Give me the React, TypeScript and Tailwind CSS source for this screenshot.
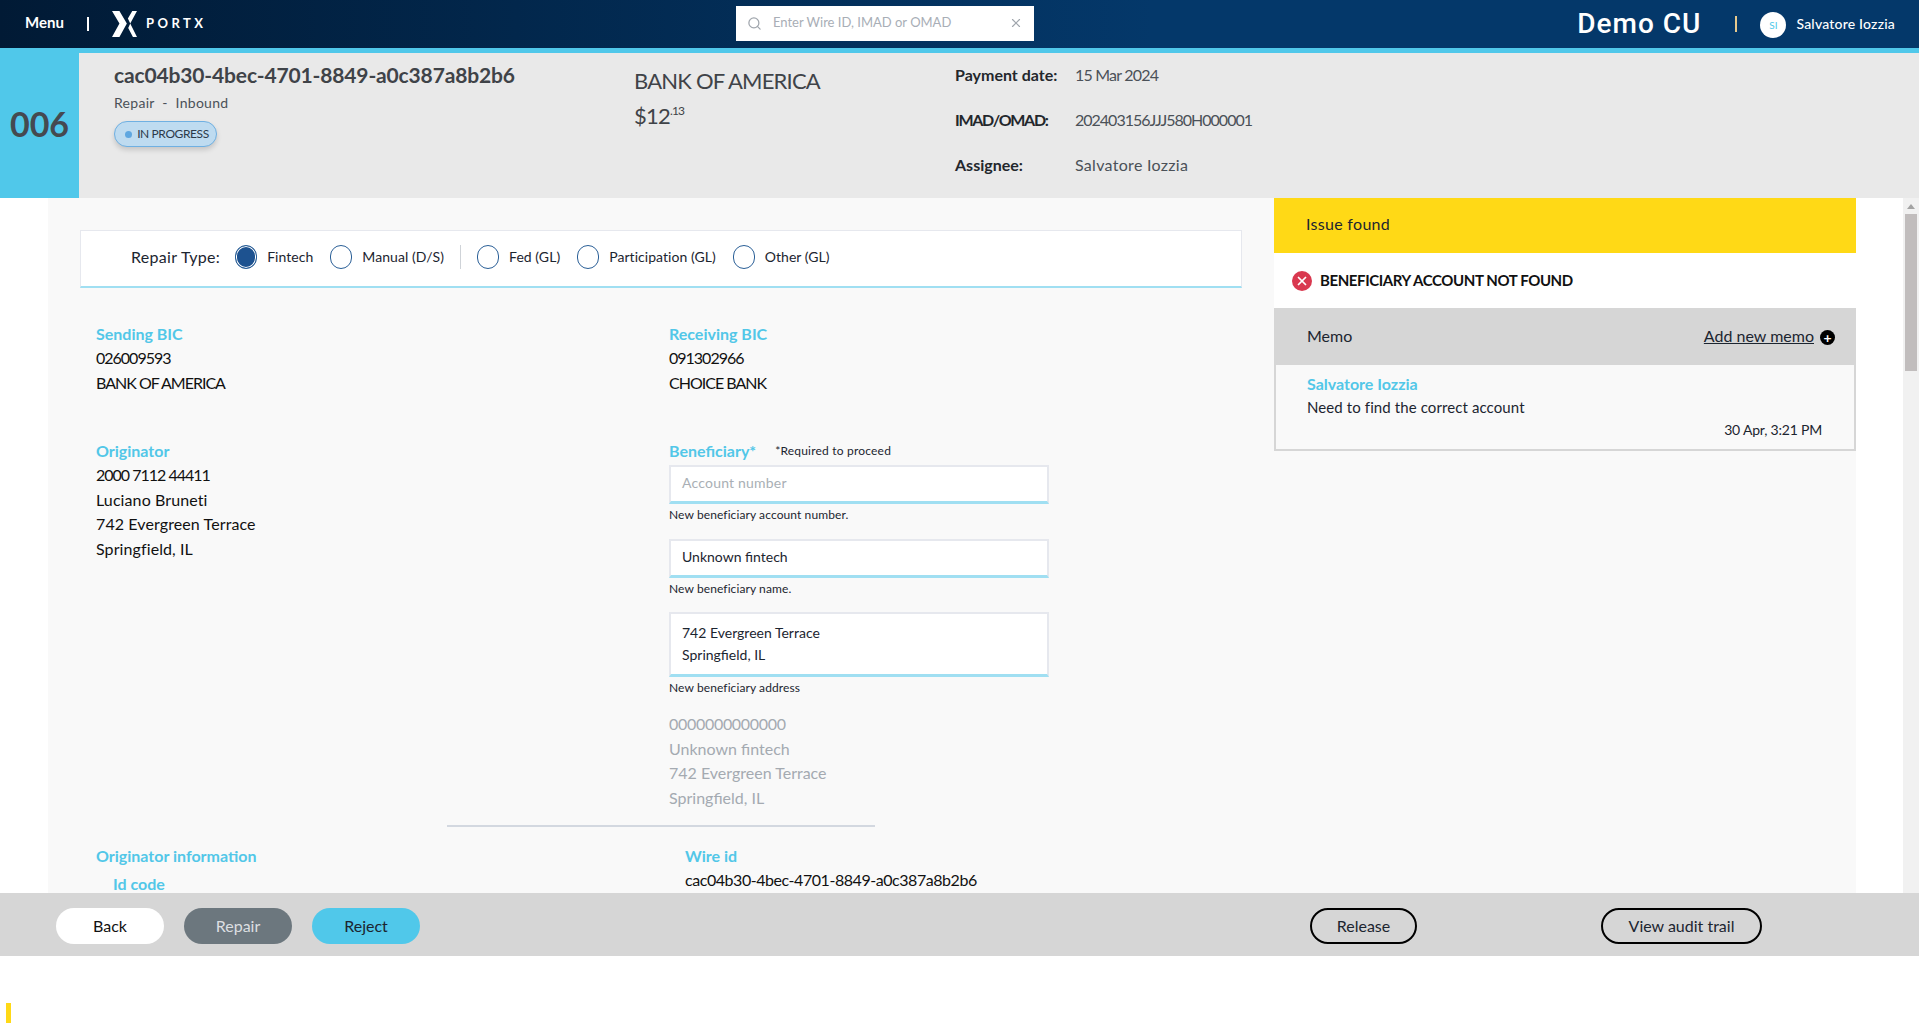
import { Search, X } from "lucide-react";

type RadioT = {
  label: string;
  checked?: boolean;
  divider?: boolean;
};

const repairTypes: RadioT[] = [
  { label: "Fintech", checked: true },
  { label: "Manual (D/S)", divider: true },
  { label: "Fed (GL)" },
  { label: "Participation (GL)" },
  { label: "Other (GL)" },
];

const Logo = () => (
  <svg width="25" height="26" viewBox="0 0 74 77" fill="white">
    <path d="M0 0H22L44 37L22 77H0L22 37Z" />
    <path d="M74 0H60L47 22L54 37L48 50L62 77H74L54 37Z" />
  </svg>
);

const RadioItem = ({ label, checked, divider }: RadioT) => (
  <>
    <div className="flex items-center">
      <span
        className={`h-[24px] w-[22px] rounded-full border border-[#2a5f97] ${checked ? "bg-[#1d5290] ring-1 ring-inset ring-white" : "bg-white"}`}
      />
      <span className="ml-[10px] text-[14px] tracking-[0.05px] text-[#1c2530]">{label}</span>
    </div>
    {divider ? <div className="mx-[16px] h-[24px] w-px bg-[#cfd3d8]" /> : <div className="w-[17px]" />}
  </>
);

const Field = ({
  title,
  lines,
  className,
}: {
  title: string;
  lines: string[];
  className?: string;
}) => (
  <div className={className}>
    <p className="text-[16px] leading-[25px] font-bold text-[#52c7e8]">{title}</p>
    {lines.map((line) => (
      <p
        key={line}
        className={`text-[16px] leading-[24.600px] text-[#111] ${/^[A-Z0-9 ]+$/.test(line) ? "tracking-[-1px]" : "tracking-[0.1px]"}`}
      >
        {line}
      </p>
    ))}
  </div>
);

const InputBox = ({ children, height }: { children: React.ReactNode; height: string }) => (
  <div
    className={`${height} w-[380px] border-2 border-b-[3px] border-[#e6e8ee] border-b-[#a0dff2] bg-white px-[11px] text-[14px]`}
  >
    {children}
  </div>
);

const Helper = ({ text }: { text: string }) => (
  <p className="mt-[3px] text-[12px] leading-[16px] tracking-[0.1px] text-[#1c2530]">{text}</p>
);

export default function App() {
  return (
    <div className="flex h-[1023px] w-full flex-col overflow-hidden bg-white font-['Lato',sans-serif]">
      {/* top bar */}
      <header className="relative flex h-[53px] shrink-0 items-center border-b-[5px] border-[#50c8ea] bg-gradient-to-r from-[#011a35] to-[#04386a] to-60%">
        <span className="ml-[25px] pb-[4px] text-[15px] font-bold text-white">Menu</span>
        <span className="ml-[23px] h-[14px] w-[2px] bg-white" />
        <div className="ml-[23px] flex">
          <Logo />
        </div>
        <span className="ml-[9px] text-[13px] font-bold tracking-[3.500px] text-white">PORTX</span>
        <div className="absolute top-[6px] left-[736px] flex h-[35px] w-[298px] items-center bg-white px-[11px] pb-[1px] text-[13px] text-[#a8aeb6]">
          <Search size={15} className="text-[#a0a6ad]" />
          <span className="ml-[11px] flex-1">Enter Wire ID, IMAD or OMAD</span>
          <X size={14} className="text-[#a0a6ad]" />
        </div>
        <span className="ml-auto font-['Roboto',sans-serif] text-[28px] font-medium tracking-[1px] text-white">
          Demo CU
        </span>
        <span className="ml-[34px] h-[16px] w-[2px] bg-[#e7c98d]" />
        <span className="mt-[2px] ml-[23px] flex h-[26px] w-[26px] items-center justify-center rounded-full bg-white text-[10px] text-[#50c8ea]">
          SI
        </span>
        <span className="mr-[24px] ml-[10px] pb-[2px] text-[14px] font-medium tracking-[0.2px] text-white">
          Salvatore Iozzia
        </span>
      </header>

      {/* wire summary */}
      <section className="flex h-[145px] shrink-0 bg-[#e9e9e9]">
        <div className="flex w-[79px] items-center justify-center bg-[#50c8ea] pb-[5px] text-[34px] font-bold text-[#454a50]">
          006
        </div>
        <div className="w-[555px] pt-[6px] pl-[35px]">
          <h1 className="text-[21px] leading-[32px] font-bold tracking-[-0.15px] text-[#3f4348]">
            cac04b30-4bec-4701-8849-a0c387a8b2b6
          </h1>
          <p className="mt-[2px] text-[14px] leading-[20px] tracking-[0.3px] text-[#4b5158]">Repair&nbsp; -&nbsp; Inbound</p>
          <div className="mt-[8px] flex h-[26px] w-[103px] items-center justify-center rounded-full border border-[#6fb0e2] bg-[#bedbf0] pl-[3px] text-[12px] tracking-[-0.4px] text-[#2c3a4a] shadow-[0_3px_5px_rgba(0,0,0,0.15)]">
            <span className="mr-[5px] h-[7px] w-[7px] rounded-full bg-[#5fa7e0]" />
            IN PROGRESS
          </div>
        </div>
        <div className="w-[321px] pt-[12px] text-[#3f4348]">
          <p className="text-[22px] leading-[32px] tracking-[-0.8px]">BANK OF AMERICA</p>
          <p className="mt-[3px] text-[22px] leading-[32px] tracking-[-0.8px]">
            $12<sup className="relative -top-[9px] text-[12px]">.13</sup>
          </p>
        </div>
        <div className="grid grid-cols-[120px_1fr] content-start gap-y-[22px] pt-[10px] text-[16px] leading-[23px] text-[#4b5158]">
          <span className="font-bold text-[#23272c]">Payment date:</span>
          <span className="tracking-[-0.8px]">15 Mar 2024</span>
          <span className="font-bold tracking-[-1.300px] text-[#23272c]">IMAD/OMAD:</span>
          <span className="tracking-[-1px]">202403156JJJ580H000001</span>
          <span className="font-bold text-[#23272c]">Assignee:</span>
          <span className="tracking-[0.3px]">Salvatore Iozzia</span>
        </div>
      </section>

      {/* scroll area */}
      <main className="flex min-h-0 flex-1">
        <div className="flex flex-1 overflow-hidden pl-[48px]">
          <div className="flex w-[1808px] bg-[#f9f9f9]">
            <div className="w-[1226px] shrink-0 pt-[32px] pl-[32px]">
              <div className="flex h-[58px] w-[1162px] items-center border border-b-2 border-[#e6e8ee] border-b-[#a0dff2] bg-white pb-[4px] pl-[50px]">
                <span className="mr-[15px] text-[16px] tracking-[0.3px] text-[#1c2530]">Repair Type:</span>
                {repairTypes.map((item) => (
                  <RadioItem key={item.label} {...item} />
                ))}
              </div>

              <div className="mt-[33px] grid grid-cols-[573px_1fr] pl-[16px]">
                <Field title="Sending BIC" lines={["026009593", "BANK OF AMERICA"]} />
                <Field title="Receiving BIC" lines={["091302966", "CHOICE BANK"]} />
                <Field
                  className="mt-[43px]"
                  title="Originator"
                  lines={["2000 7112 44411", "Luciano Bruneti", "742 Evergreen Terrace", "Springfield, IL"]}
                />
                <div className="mt-[43px]">
                  <div className="flex items-center">
                    <span className="text-[16px] leading-[25px] font-bold text-[#52c7e8]">Beneficiary*</span>
                    <span className="ml-[19px] text-[12px] tracking-[0.2px] text-[#1c2530]">*Required to proceed</span>
                  </div>
                  <div className="mt-[2px]">
                    <InputBox height="h-[39px]">
                      <p className="pt-[5px] tracking-[0.2px] text-[#a9afb5]">Account number</p>
                    </InputBox>
                  </div>
                  <Helper text="New beneficiary account number." />
                  <div className="mt-[16px]">
                    <InputBox height="h-[39px]">
                      <p className="pt-[5px] text-[#1c2530]">Unknown fintech</p>
                    </InputBox>
                  </div>
                  <Helper text="New beneficiary name." />
                  <div className="mt-[15px]">
                    <InputBox height="h-[65px]">
                      <p className="pt-[8px] leading-[22px] text-[#1c2530]">
                        742 Evergreen Terrace
                        <br />
                        Springfield, IL
                      </p>
                    </InputBox>
                  </div>
                  <Helper text="New beneficiary address" />
                  <div className="mt-[16px] text-[16px] leading-[24.600px] text-[#a4aab1]">
                    <p className="tracking-[-0.3px]">0000000000000</p>
                    <p>Unknown fintech</p>
                    <p>742 Evergreen Terrace</p>
                    <p>Springfield, IL</p>
                  </div>
                </div>
              </div>

              <div className="mt-[14px] ml-[367px] h-[2px] w-[428px] bg-[#d3d8e0]" />

              <div className="mt-[16px] grid grid-cols-[589px_1fr] pl-[16px]">
                <p className="text-[16px] leading-[25px] font-bold text-[#52c7e8]">Originator information</p>
                <p className="text-[16px] leading-[25px] font-bold text-[#52c7e8]">Wire id</p>
                <p className="pt-[6px] pl-[17px] text-[16px] leading-[20px] font-bold text-[#52c7e8]">Id code</p>
                <p className="text-[16px] leading-[24px] tracking-[-0.45px] text-[#111]">
                  cac04b30-4bec-4701-8849-a0c387a8b2b6
                </p>
              </div>
            </div>

            <aside className="w-[582px] shrink-0">
              <div className="flex h-[55px] items-center bg-[#ffd916] pb-[3px] pl-[32px] text-[16px] tracking-[0.3px] text-[#1c2530]">
                Issue found
              </div>
              <div className="flex h-[55px] items-center bg-white pl-[18px]">
                <span className="flex h-[20px] w-[20px] items-center justify-center rounded-full bg-[#d9384f]">
                  <X size={14} strokeWidth={3} className="text-white" />
                </span>
                <span className="ml-[8px] pb-[1px] text-[15px] font-bold tracking-[-0.4px] text-[#111]">
                  BENEFICIARY ACCOUNT NOT FOUND
                </span>
              </div>
              <div className="flex h-[57px] items-center bg-[#d6d6d6] pr-[21px] pb-[1px] pl-[33px] text-[16px] text-[#1c2530]">
                <span>Memo</span>
                <span className="ml-auto underline">Add new memo</span>
                <span className="mt-[3px] ml-[6px] flex h-[15px] w-[15px] items-center justify-center rounded-full bg-black text-[14px] leading-none font-bold text-white">
                  +
                </span>
              </div>
              <div className="h-[86px] border-x-2 border-b-2 border-[#d6d6d6] pt-[7px] pr-[32px] pl-[31px]">
                <p className="text-[16px] leading-[24px] font-bold text-[#52c7e8]">Salvatore Iozzia</p>
                <p className="text-[15px] leading-[22px] tracking-[0.1px] text-[#1c2530]">Need to find the correct account</p>
                <p className="mt-[1px] text-right text-[14px] leading-[22px] tracking-[-0.2px] text-[#1c2530]">30 Apr, 3:21 PM</p>
              </div>
            </aside>
          </div>
        </div>

        {/* scrollbar */}
        <div className="ml-[47px] flex w-[16px] shrink-0 flex-col items-center bg-[#f1f1f1] pt-[6px]">
          <span className="h-0 w-0 border-x-[4px] border-b-[5px] border-x-transparent border-b-[#a3a3a3]" />
          <span className="mt-[5px] h-[157px] w-[12px] bg-[#c1bdbd]" />
        </div>
      </main>

      {/* actions */}
      <footer className="flex h-[63px] shrink-0 items-center bg-[#d6d6d6] pt-[2px] pl-[56px] text-[16px]">
        <button className="h-[36px] w-[108px] rounded-full bg-white text-[#111]">Back</button>
        <button className="ml-[20px] h-[36px] w-[108px] rounded-full bg-[#6c777e] text-[#dcdfe1]">Repair</button>
        <button className="ml-[20px] h-[36px] w-[108px] rounded-full bg-[#50c8ea] text-[#1c2530]">Reject</button>
        <button className="ml-[890px] h-[36px] w-[107px] rounded-full border-2 border-black text-[#1c2530]">Release</button>
        <button className="ml-[184px] h-[36px] w-[161px] rounded-full border-2 border-black text-[#1c2530]">View audit trail</button>
      </footer>

      <div className="flex h-[67px] shrink-0 items-end pl-[6px]">
        <span className="h-[20px] w-[5px] bg-[#ffd916]" />
      </div>
    </div>
  );
}
